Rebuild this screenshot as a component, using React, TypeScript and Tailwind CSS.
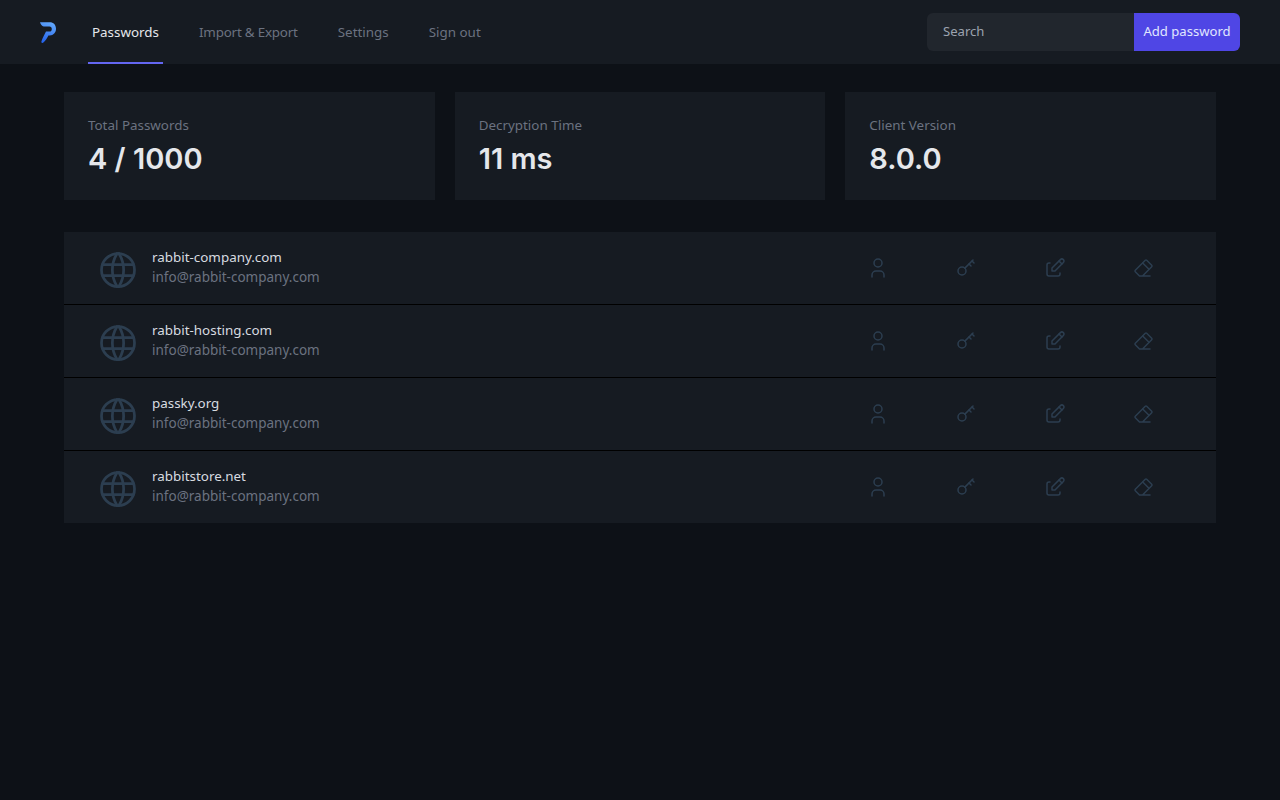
import type { ReactNode } from 'react';

const stats = [
  { label: 'Total Passwords', value: '4 / 1000' },
  { label: 'Decryption Time', value: '11 ms' },
  { label: 'Client Version', value: '8.0.0' },
];

const sites = ['rabbit-company.com', 'rabbit-hosting.com', 'passky.org', 'rabbitstore.net'];

function Icon({ size = 24, children }: { size?: number; children: ReactNode }) {
  return (
    <svg
      width={size}
      height={size}
      viewBox="0 0 24 24"
      fill="none"
      stroke="#2c3e50"
      strokeWidth={1.5}
      strokeLinecap="round"
      strokeLinejoin="round"
    >
      {children}
    </svg>
  );
}

function Logo() {
  return (
    <svg width="16" height="21" viewBox="0 0 16 21" fill="none">
      <defs>
        <linearGradient id="logoFill" gradientUnits="userSpaceOnUse" x1="3" y1="20" x2="11" y2="1">
          <stop offset="0" stopColor="#2563eb" />
          <stop offset="1" stopColor="#60a5fa" />
        </linearGradient>
      </defs>
      <path
        d="M0 .2H9.6C13.6 .2 16 2.8 16 6.8 16 10.8 13.4 13.4 9.8 13.4H8.4C7.4 15.6 5.4 18.6 3.4 20.6 2.2 21.4 1.2 20.6 1.4 19.4 2.6 16.2 4.6 12.6 6 9.6H9.4C11 9.6 11.8 8.4 11.8 6.9 11.8 5.4 11 4.4 9.4 4.4H3.6C2 4 .6 2.2 0 .2Z"
        fill="url(#logoFill)"
      />
    </svg>
  );
}

function Row({ site }: { site: string }) {
  return (
    <div className="flex h-[72px] items-center bg-[#161b22] pl-8 pr-[29px]">
      <div className="mt-1 shrink-0">
        <Icon size={44}>
          <circle cx="12" cy="12" r="9" />
          <path d="M3.6 9h16.8" />
          <path d="M3.6 15h16.8" />
          <path d="M11.5 3a17 17 0 0 0 0 18" />
          <path d="M12.5 3a17 17 0 0 1 0 18" />
        </Icon>
      </div>
      <div className="ml-3 flex-1 pb-[2px] leading-5">
        <p className="text-[13.4px] text-[#d8dbe0]">{site}</p>
        <p className="text-[13.5px] text-[#6b7280]">info@rabbit-company.com</p>
      </div>
      <div className="flex w-[88px] justify-center">
        <Icon>
          <circle cx="12" cy="7" r="4" />
          <path d="M6 21v-2a4 4 0 0 1 4-4h4a4 4 0 0 1 4 4v2" />
        </Icon>
      </div>
      <div className="flex w-[88px] justify-center">
        <Icon>
          <circle cx="8" cy="15" r="4" />
          <path d="M10.85 12.15L19 4" />
          <path d="M18 5l2 2" />
          <path d="M15 8l2 2" />
        </Icon>
      </div>
      <div className="flex w-[89px] justify-center">
        <Icon>
          <path d="M7 7h-1a2 2 0 0 0-2 2v9a2 2 0 0 0 2 2h9a2 2 0 0 0 2-2v-1" />
          <path d="M20.385 6.585a2.1 2.1 0 0 0-2.97-2.97l-8.415 8.385v3h3l8.385-8.415z" />
          <path d="M16 5l3 3" />
        </Icon>
      </div>
      <div className="flex w-[88px] justify-center">
        <Icon>
          <path d="M19 20h-10.5l-4.21-4.3a1 1 0 0 1 0-1.41l10-10a1 1 0 0 1 1.41 0l5 5a1 1 0 0 1 0 1.41l-9.2 9.3" />
          <path d="M18 13.3l-6.3-6.3" />
        </Icon>
      </div>
    </div>
  );
}

export default function App() {
  return (
    <div className="min-h-screen bg-[#0d1117] font-['Noto_Sans',sans-serif]">
      {/* Nav */}
      <nav className="flex h-16 items-center justify-between bg-[#161b22] px-10">
        <div className="flex h-full items-center">
          <Logo />
          <div className="ml-8 flex h-full gap-8 pt-[2px] text-[13.4px]">
            <a className="flex items-center border-b-2 border-[#6366f1] px-1 text-[#e5e7eb]">Passwords</a>
            <a className="flex items-center border-b-2 border-transparent px-1 tracking-[-0.2px] text-[#6b7280]">
              Import &amp; Export
            </a>
            <a className="flex items-center border-b-2 border-transparent px-1 text-[#6b7280]">Settings</a>
            <a className="flex items-center border-b-2 border-transparent px-1 text-[#6b7280]">Sign out</a>
          </div>
        </div>
        <div className="flex h-[38px] w-[313px] text-[13.1px]">
          <input
            placeholder="Search"
            className="h-full w-[207px] rounded-l-md bg-[#21262d] px-4 pb-[2px] text-[#e5e7eb] outline-none placeholder:text-[#9ca3af]"
          />
          <button className="flex-1 rounded-r-md bg-[#4f46e5] text-center text-[#e0e7ff]">Add password</button>
        </div>
      </nav>

      <main className="mx-16 pt-7">
        {/* Stats */}
        <div className="grid grid-cols-3 gap-5">
          {stats.map((stat) => (
            <div key={stat.label} className="h-[108px] bg-[#161b22] px-6 pt-[23px]">
              <p className="text-[13.4px] leading-5 text-[#6b7280]">{stat.label}</p>
              <p className="mt-[6px] font-['Inter',sans-serif] text-[29px] leading-9 font-semibold text-[#e5e7eb]">
                {stat.value}
              </p>
            </div>
          ))}
        </div>

        {/* Passwords */}
        <div className="mt-8 flex flex-col gap-px bg-black">
          {sites.map((site) => (
            <Row key={site} site={site} />
          ))}
        </div>
      </main>
    </div>
  );
}
